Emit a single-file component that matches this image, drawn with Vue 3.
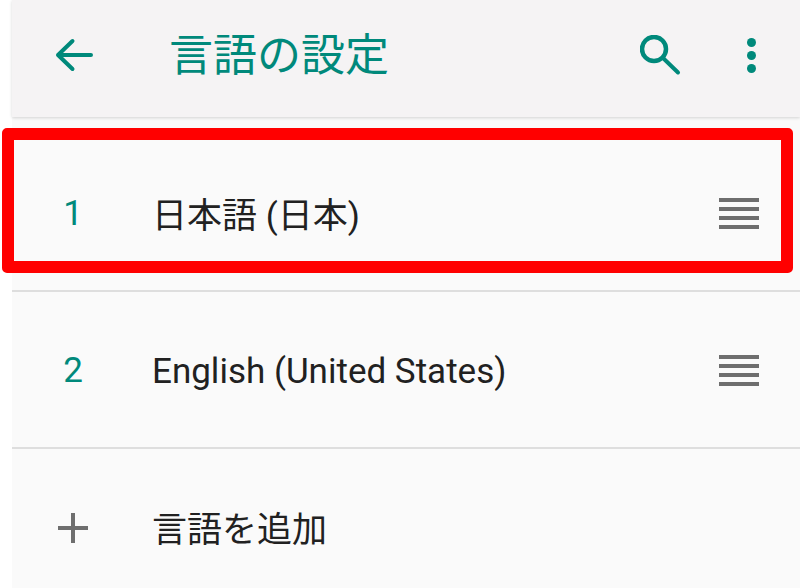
<template>
  <div class="screen">
    <header class="appbar">
      <button class="icon-btn back" type="button" aria-label="戻る">
        <svg width="40" height="36" viewBox="0 0 40 36">
          <path d="M37 18H4M18.500 4 4 18l14.500 14" fill="none" stroke="#00897b" stroke-width="4" stroke-linecap="round" stroke-linejoin="round" />
        </svg>
      </button>
      <h1 class="title">言語の設定</h1>
      <button class="icon-btn search" type="button" aria-label="検索">
        <svg width="42" height="42" viewBox="0 0 42 42">
          <circle cx="14" cy="14" r="12" fill="none" stroke="#00897b" stroke-width="4.500" />
          <path d="M23 23l15 14.500" fill="none" stroke="#00897b" stroke-width="4" stroke-linecap="round" />
        </svg>
      </button>
      <button class="icon-btn more" type="button" aria-label="その他">
        <span></span><span></span><span></span>
      </button>
    </header>

    <ul class="list">
      <li v-for="lang in languages" :key="lang.order" class="row">
        <span class="order">{{ lang.order }}</span>
        <span class="name" :class="{ latin: lang.latin }">{{ lang.name }}</span>
        <span class="handle"><i></i><i></i><i></i><i></i></span>
      </li>
      <li class="row add">
        <span class="order">
          <svg width="32" height="32" viewBox="0 0 32 32">
            <path d="M16 1v30M1 16h30" stroke="#6e6e6e" stroke-width="4" />
          </svg>
        </span>
        <span class="name">言語を追加</span>
      </li>
    </ul>

    <div class="highlight"></div>
  </div>
</template>

<script setup>
const languages = [
  { order: 1, name: '日本語 (日本)', latin: false },
  { order: 2, name: 'English (United States)', latin: true },
];
</script>

<style>
html,
body {
  background: #fff;
  overflow: hidden;
}
</style>

<style scoped>
.screen {
  position: relative;
  height: 588px;
  margin-left: 12px;
  overflow: visible;
  background: #fafafa;
  font-family: Roboto, "Noto Sans CJK JP", sans-serif;
}

.appbar {
  display: flex;
  align-items: center;
  height: 117px;
  background: #f5f3f4;
  box-shadow: 0 1px 3px rgba(0, 0, 0, 0.16);
}

.icon-btn {
  display: flex;
  align-items: center;
  justify-content: center;
  padding: 0;
  border: 0;
  background: none;
}

.back {
  margin-left: 42px;
  margin-top: -7px;
}

.title {
  flex: 1;
  margin: -14px 0 0 75px;
  font-size: 44px;
  font-weight: 400;
  color: #00897b;
}

.search {
  margin: -5px 0 0 0;
}

.more {
  flex-direction: column;
  gap: 4px;
  margin: -7px 44px 0 65px;
}

.more span {
  width: 9px;
  height: 9px;
  border-radius: 50%;
  background: #00897b;
}

.list {
  margin: 0;
  padding: 18px 0 0;
  list-style: none;
}

.row {
  display: flex;
  align-items: center;
  height: 155px;
  border-bottom: 2px solid #dedede;
}

.row.add {
  border-bottom: 0;
}

.order {
  display: flex;
  justify-content: center;
  width: 122px;
  flex: none;
  margin-right: 18px;
  padding-top: 2px;
  font-size: 35px;
  color: #00897b;
}

.name {
  flex: 1;
  font-size: 35px;
  color: #212121;
}

.name.latin {
  padding-top: 3px;
}

.handle {
  display: flex;
  flex-direction: column;
  gap: 5px;
  width: 40px;
  margin-right: 41px;
  margin-top: 2px;
}

.handle i {
  display: block;
  height: 4px;
  background: #6e6e6e;
}

.highlight {
  position: absolute;
  top: 128px;
  left: -10px;
  width: 791px;
  height: 145px;
  box-sizing: border-box;
  border: 12px solid #f00;
  border-radius: 5px;
}
</style>
